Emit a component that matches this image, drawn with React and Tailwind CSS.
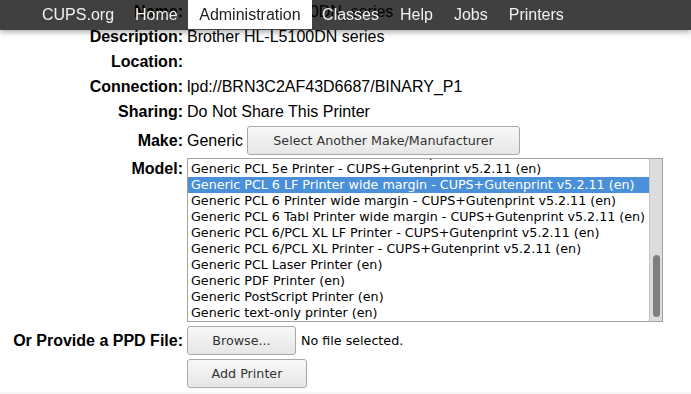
import React from 'react';

const navItems = ['CUPS.org', 'Home', 'Administration', 'Classes', 'Help', 'Jobs', 'Printers'];

const models = [
  'Generic PCL 5c Printer - CUPS+Gutenprint v5.2.11 (en)',
  'Generic PCL 5e Printer - CUPS+Gutenprint v5.2.11 (en)',
  'Generic PCL 6 LF Printer wide margin - CUPS+Gutenprint v5.2.11 (en)',
  'Generic PCL 6 Printer wide margin - CUPS+Gutenprint v5.2.11 (en)',
  'Generic PCL 6 Tabl Printer wide margin - CUPS+Gutenprint v5.2.11 (en)',
  'Generic PCL 6/PCL XL LF Printer - CUPS+Gutenprint v5.2.11 (en)',
  'Generic PCL 6/PCL XL Printer - CUPS+Gutenprint v5.2.11 (en)',
  'Generic PCL Laser Printer (en)',
  'Generic PDF Printer (en)',
  'Generic PostScript Printer (en)',
  'Generic text-only printer (en)',
];

const btn =
  "h-[29px] rounded-[3px] border border-[#a9a9a9] bg-gradient-to-b from-[#f8f8f8] to-[#e6e6e6] text-[12.7px] text-[#333] font-['DejaVu_Sans',sans-serif]";

function Row({ label, children, className = '' }) {
  return (
    <div className={`grid grid-cols-[183px_1fr] gap-x-[4px] ${className}`}>
      <div className="text-right font-bold">{label}</div>
      <div>{children}</div>
    </div>
  );
}

export default function App() {
  return (
    <div className="relative min-h-[394px] bg-white font-['Liberation_Sans',Arial,sans-serif] text-[16px] text-black">
      <header className="fixed top-0 left-0 right-0 z-10 flex h-[30px] bg-black/75 pl-[31.5px] shadow-[0_2px_6px_rgba(0,0,0,0.35)]">
        {navItems.map((item) => (
          <div
            key={item}
            className={
              item === 'Administration'
                ? 'flex h-[29px] items-center bg-white px-[11px] text-[#222]'
                : 'flex h-[30px] items-center px-[10.5px] text-[#f0f0f0]'
            }
          >
            {item}
          </div>
        ))}
      </header>

      <div className="flex flex-col leading-[25px]">
        <Row label="Name:" className="-mt-[1px]">Brother_HL-L5100DN_series</Row>
        <Row label="Description:">Brother HL-L5100DN series</Row>
        <Row label="Location:"> </Row>
        <Row label="Connection:">lpd://BRN3C2AF43D6687/BINARY_P1</Row>
        <Row label="Sharing:">Do Not Share This Printer</Row>

        <div className="grid grid-cols-[183px_1fr] items-center gap-x-[4px] pt-[2px]">
          <div className="text-right font-bold">Make:</div>
          <div className="flex items-center gap-[4px]">
            <span>Generic</span>
            <button className={`${btn} h-[28px] w-[273px]`}>Select Another Make/Manufacturer</button>
          </div>
        </div>

        <div className="mt-[3px] grid grid-cols-[183px_1fr] gap-x-[4px]">
          <div className="mt-[-2px] text-right font-bold">Model:</div>
          <div className="flex h-[164px] w-[476px] border border-[#a3a3a3] bg-white">
            <div className="flex-1 overflow-hidden">
              <div className="mt-[-14px] font-['DejaVu_Sans',sans-serif] text-[12.7px] leading-[16px]">
                {models.map((m, i) => (
                  <div
                    key={m}
                    className={`h-[16px] whitespace-nowrap pl-[3px] ${i === 2 ? 'bg-[#4a90d9] text-white' : 'text-black'}`}
                  >
                    {m}
                  </div>
                ))}
              </div>
            </div>
            <div className="flex w-[13px] flex-col border-l border-[#c4c4c4] bg-[#dcdcdc] pt-[96px] pb-[4px]">
              <div className="mx-auto h-[62px] w-[7px] rounded-full bg-[#7e8080]" />
            </div>
          </div>
        </div>

        <div className="mt-[4px] grid grid-cols-[183px_1fr] items-center gap-x-[4px]">
          <div className="text-right font-bold">Or Provide a PPD File:</div>
          <div className="flex items-center gap-[5px]">
            <button className={`${btn} w-[109px]`}>Browse...</button>
            <span className="font-['DejaVu_Sans',sans-serif] text-[12.7px]">No file selected.</span>
          </div>
        </div>

        <div className="mt-[4px] grid grid-cols-[183px_1fr] gap-x-[4px]">
          <div />
          <div>
            <button className={`${btn} h-[28px] w-[120px]`}>Add Printer</button>
          </div>
        </div>

        <div className="mt-[4px] h-[10px] bg-[#f6f6f6]" />
      </div>
    </div>
  );
}
